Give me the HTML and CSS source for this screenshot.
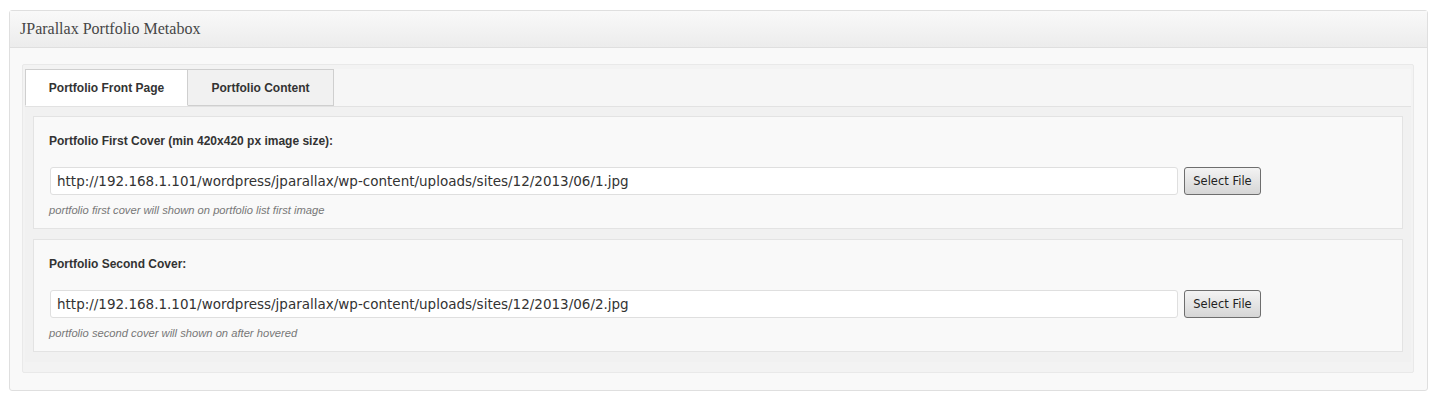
FILE: index.html
```html
<!DOCTYPE html>
<html>
<head>
<meta charset="utf-8">
<link rel="stylesheet" href="styles.css">
</head>
<body>
<div class="postbox">
  <div class="postbox-head"><h3 class="postbox-title">JParallax Portfolio Metabox</h3></div>
  <div class="postbox-inside">
    <div class="tabs-wrap">
      <div class="tab-bar">
        <div class="tab tab-active">Portfolio Front Page</div>
        <div class="tab">Portfolio Content</div>
      </div>
      <div class="tab-panel">
        <div class="field">
          <div class="field-label">Portfolio First Cover (min 420x420 px image size):</div>
          <div class="field-row">
            <input class="field-input" type="text" value="http://192.168.1.101/wordpress/jparallax/wp-content/uploads/sites/12/2013/06/1.jpg">
            <button class="select-btn" type="button">Select File</button>
          </div>
          <div class="field-desc">portfolio first cover will shown on portfolio list first image</div>
        </div>
        <div class="field">
          <div class="field-label">Portfolio Second Cover:</div>
          <div class="field-row">
            <input class="field-input" type="text" value="http://192.168.1.101/wordpress/jparallax/wp-content/uploads/sites/12/2013/06/2.jpg">
            <button class="select-btn" type="button">Select File</button>
          </div>
          <div class="field-desc">portfolio second cover will shown on after hovered</div>
        </div>
      </div>
    </div>
  </div>
</div>
</body>
</html>
```
FILE: styles.css
```css
html, body {
  margin: 0;
  padding: 0;
  background: #ffffff;
}
body {
  padding: 10px 0 0 9px;
  font-family: "Liberation Sans", Arial, sans-serif;
  color: #333;
}
.postbox {
  width: 1419px;
  height: 381px;
  box-sizing: border-box;
  border: 1px solid #dfdfdf;
  border-radius: 3px;
  background: #f9f9f9;
  box-shadow: 0 1px 0 #fff inset;
  display: flex;
  flex-direction: column;
}
.postbox-head {
  height: 36px;
  border-bottom: 1px solid #dfdfdf;
  background: linear-gradient(to bottom, #f9f9f9, #ececec);
  display: flex;
  align-items: center;
  padding-left: 10px;
}
.postbox-title {
  margin: 0;
  font-family: "Liberation Serif", "Times New Roman", serif;
  font-weight: normal;
  font-size: 16px;
  color: #464646;
}
.postbox-inside {
  flex: 1;
  padding: 16px 13px 17px 12px;
  display: flex;
}
.tabs-wrap {
  flex: 1;
  border: 1px solid #e9e9e9;
  border-radius: 2px;
  background: #f3f3f3;
  padding: 4px 2px 10px 2px;
  display: flex;
  flex-direction: column;
}
.tab-bar {
  display: flex;
  height: 37px;
  background: #f6f6f6;
  border-bottom: 1px solid #e2e2e2;
}
.tab {
  width: 146px;
  box-sizing: border-box;
  border: 1px solid #cfcfcf;
  border-left: none;
  background: #f1f1f1;
  font-weight: bold;
  font-size: 12px;
  color: #333;
  display: flex;
  align-items: center;
  justify-content: center;
  height: 37px;
}
.tab-active {
  width: 163px;
  border-left: 1px solid #cfcfcf;
  background: #ffffff;
  border-bottom-color: #ffffff;
}
.tab-panel {
  flex: 1;
  background: #f1f1f1;
  padding: 9px 8px 10px 8px;
  display: flex;
  flex-direction: column;
  gap: 10px;
}
.field {
  background: #f9f9f9;
  border: 1px solid #e3e3e3;
  padding: 16px 15px 9px 15px;
  height: 113px;
  box-sizing: border-box;
}
.field-label {
  font-weight: bold;
  font-size: 12px;
  line-height: 16px;
  color: #333;
}
.field-row {
  display: flex;
  align-items: center;
  margin-top: 18px;
  gap: 6px;
}
.field-input {
  width: 1128px;
  height: 28px;
  box-sizing: border-box;
  margin: 0 0 0 1px;
  border: 1px solid #dfdfdf;
  border-radius: 3px;
  background: #fff;
  padding: 0 6px;
  font-family: "DejaVu Sans", Verdana, sans-serif;
  font-size: 13.5px;
  color: #333;
  outline: none;
}
.select-btn {
  width: 77px;
  height: 28px;
  box-sizing: border-box;
  border: 1px solid #6e6e6e;
  border-radius: 3px;
  background: linear-gradient(to bottom, #f3f3f3, #d6d6d6);
  font-family: "DejaVu Sans", Verdana, sans-serif;
  font-size: 11.5px;
  color: #222;
  padding: 0;
}
.field-desc {
  margin-top: 7px;
  font-style: italic;
  font-size: 11.2px;
  line-height: 16px;
  color: #777;
}
```
